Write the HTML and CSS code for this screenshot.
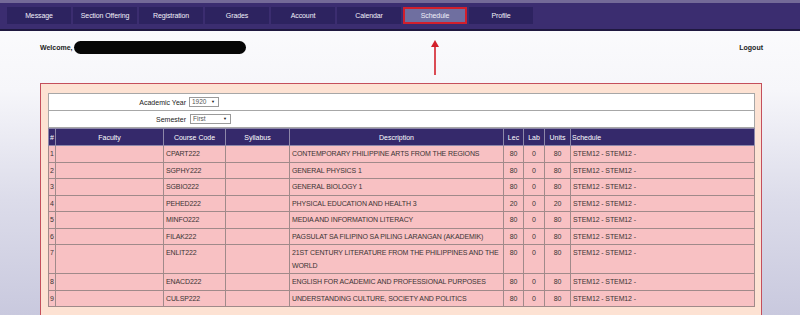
FILE: index.html
```html
<!DOCTYPE html>
<html lang="en">
<head>
    <meta charset="UTF-8">
    <meta name="viewport" content="width=device-width, initial-scale=1.0">
    <title>Schedule</title>
    <link rel="stylesheet" href="styles.css">
</head>
<body>
    <nav class="topbar">
        <ul class="menu">
            <li><a href="#">Message</a></li>
            <li><a href="#">Section Offering</a></li>
            <li><a href="#">Registration</a></li>
            <li><a href="#">Grades</a></li>
            <li><a href="#">Account</a></li>
            <li><a href="#">Calendar</a></li>
            <li class="active"><a href="#">Schedule</a></li>
            <li><a href="#">Profile</a></li>
        </ul>
    </nav>

    <div class="page">
        <!-- annotation pointing at the active tab -->
        <svg class="arrow" width="12" height="38" viewBox="0 0 12 38">
            <path d="M6 2 L2 9 L10 9 Z" fill="#d3202b"/>
            <line x1="6" y1="8" x2="6" y2="37" stroke="#d3202b" stroke-width="1.6"/>
        </svg>

        <div class="welcome-bar">
            <div class="welcome">Welcome, <span class="redacted"></span></div>
            <a href="#" class="logout">Logout</a>
        </div>

        <div class="panel">
            <table class="filters">
                <tr>
                    <td class="filter-label">Academic Year</td>
                    <td>
                        <span class="select-wrap year">
                            <select><option>1920</option></select>
                        </span>
                    </td>
                </tr>
                <tr>
                    <td class="filter-label">Semester</td>
                    <td>
                        <span class="select-wrap sem">
                            <select><option>First</option></select>
                        </span>
                    </td>
                </tr>
            </table>

            <table class="schedule">
                <colgroup>
                    <col style="width:7px">
                    <col style="width:108px">
                    <col style="width:62px">
                    <col style="width:64px">
                    <col style="width:214px">
                    <col style="width:20px">
                    <col style="width:21px">
                    <col style="width:26px">
                    <col>
                </colgroup>
                <thead>
                    <tr>
                        <th class="left">#</th>
                        <th>Faculty</th>
                        <th>Course Code</th>
                        <th>Syllabus</th>
                        <th>Description</th>
                        <th>Lec</th>
                        <th>Lab</th>
                        <th>Units</th>
                        <th class="left">Schedule</th>
                    </tr>
                </thead>
                <tbody>
                    <tr><td>1</td><td></td><td>CPART222</td><td></td><td>CONTEMPORARY PHILIPPINE ARTS FROM THE REGIONS</td><td class="num">80</td><td class="num">0</td><td class="num">80</td><td>STEM12 - STEM12 -</td></tr>
                    <tr><td>2</td><td></td><td>SGPHY222</td><td></td><td>GENERAL PHYSICS 1</td><td class="num">80</td><td class="num">0</td><td class="num">80</td><td>STEM12 - STEM12 -</td></tr>
                    <tr><td>3</td><td></td><td>SGBIO222</td><td></td><td>GENERAL BIOLOGY 1</td><td class="num">80</td><td class="num">0</td><td class="num">80</td><td>STEM12 - STEM12 -</td></tr>
                    <tr><td>4</td><td></td><td>PEHED222</td><td></td><td>PHYSICAL EDUCATION AND HEALTH 3</td><td class="num">20</td><td class="num">0</td><td class="num">20</td><td>STEM12 - STEM12 -</td></tr>
                    <tr><td>5</td><td></td><td>MINFO222</td><td></td><td>MEDIA AND INFORMATION LITERACY</td><td class="num">80</td><td class="num">0</td><td class="num">80</td><td>STEM12 - STEM12 -</td></tr>
                    <tr><td>6</td><td></td><td>FILAK222</td><td></td><td>PAGSULAT SA FILIPINO SA PILING LARANGAN (AKADEMIK)</td><td class="num">80</td><td class="num">0</td><td class="num">80</td><td>STEM12 - STEM12 -</td></tr>
                    <tr><td>7</td><td></td><td>ENLIT222</td><td></td><td>21ST CENTURY LITERATURE FROM THE PHILIPPINES AND THE WORLD</td><td class="num">80</td><td class="num">0</td><td class="num">80</td><td>STEM12 - STEM12 -</td></tr>
                    <tr><td>8</td><td></td><td>ENACD222</td><td></td><td>ENGLISH FOR ACADEMIC AND PROFESSIONAL PURPOSES</td><td class="num">80</td><td class="num">0</td><td class="num">80</td><td>STEM12 - STEM12 -</td></tr>
                    <tr><td>9</td><td></td><td>CULSP222</td><td></td><td>UNDERSTANDING CULTURE, SOCIETY AND POLITICS</td><td class="num">80</td><td class="num">0</td><td class="num">80</td><td>STEM12 - STEM12 -</td></tr>
                </tbody>
            </table>
        </div>
    </div>
</body>
</html>
```

FILE: styles.css
```css
html, body {
    margin: 0;
    padding: 0;
}
body {
    font-family: "Liberation Sans", Arial, sans-serif;
    font-size: 7px;
    color: #2b2b2b;
    height: 315px;
    overflow: hidden;
    background: linear-gradient(to bottom, #fdfdfe 0px, #f6f6fa 90px, #dcdcea 200px, #c9c9de 315px);
}
a {
    text-decoration: none;
    color: inherit;
}
.topbar {
    height: 26px;
    background: #3b2d70;
    border-top: 3px solid #746a98;
    border-bottom: 2px solid #1f1840;
}
.menu {
    list-style: none;
    margin: 0;
    padding: 4px 0 0 7px;
    display: flex;
    gap: 2px;
}
.menu li {
    width: 64px;
    height: 17px;
    background: #2d2360;
    box-sizing: border-box;
}
.menu li a {
    display: block;
    text-align: center;
    line-height: 17px;
    color: #f2f0fa;
    font-size: 7px;
    letter-spacing: -0.1px;
}
.menu li.active {
    background: #6f6fa0;
    border: 2px solid #d21f2c;
}
.menu li.active a {
    line-height: 13px;
}
.page {
    position: relative;
}
.arrow {
    position: absolute;
    left: 429px;
    top: 7px;
}
.welcome-bar {
    display: flex;
    justify-content: space-between;
    align-items: center;
    padding: 10px 37px 0 40px;
    height: 13px;
    font-weight: bold;
    color: #222;
}
.welcome {
    display: flex;
    align-items: center;
}
.redacted {
    display: inline-block;
    width: 172px;
    height: 13px;
    margin-left: 1px;
    background: #060606;
    border-radius: 7px;
}
.logout {
    color: #222;
}
.panel {
    margin: 29px 0 0 40px;
    width: 722px;
    height: 240px;
    box-sizing: border-box;
    border: 1px solid #c44f5c;
    background: #fde2d3;
    padding: 9px 6px 0 7px;
}
.filters {
    width: 100%;
    border-collapse: collapse;
    background: #fff;
}
.filters td {
    border-top: 1px solid #a7a7a7;
    border-bottom: 1px solid #a7a7a7;
    height: 16px;
    padding: 0;
    color: #222;
}
.filters tr td:first-child {
    border-left: 1px solid #a7a7a7;
}
.filters tr td:last-child {
    border-right: 1px solid #a7a7a7;
}
.filter-label {
    width: 137px;
    text-align: right;
    padding-right: 3px !important;
}
.select-wrap {
    position: relative;
    display: inline-block;
    vertical-align: middle;
}
.select-wrap::after {
    content: "\25BC";
    position: absolute;
    right: 4px;
    top: 2px;
    font-size: 4px;
    color: #111;
    pointer-events: none;
}
.select-wrap select {
    appearance: none;
    -webkit-appearance: none;
    font-family: inherit;
    font-size: 6.5px;
    color: #555;
    background: #fff;
    border: 1px solid #9a9a9a;
    border-radius: 0;
    height: 10px;
    padding: 0 0 0 2px;
    margin: 0;
    line-height: 8px;
}
.select-wrap.year select {
    width: 30px;
}
.select-wrap.sem {
    margin-left: 1px;
}
.select-wrap.sem select {
    width: 41px;
}
.schedule {
    width: 100%;
    table-layout: fixed;
    border-collapse: collapse;
}
.schedule th {
    background: #35296b;
    color: #fff;
    font-weight: normal;
    height: 16px;
    padding: 0 1px;
    border: 1px solid #8d87a9;
    text-align: center;
}
.schedule th.left {
    text-align: left;
}
.schedule td {
    background: #f8c1c3;
    color: #3a3434;
    border: 1px solid #a08a8a;
    padding: 2px 2px 1px 2px;
    line-height: 12.5px;
    vertical-align: top;
    letter-spacing: -0.12px;
    overflow: hidden;
    white-space: normal;
}
.schedule td:first-child {
    padding: 2px 1px 1px;
}
.schedule td.num {
    text-align: center;
}
```
